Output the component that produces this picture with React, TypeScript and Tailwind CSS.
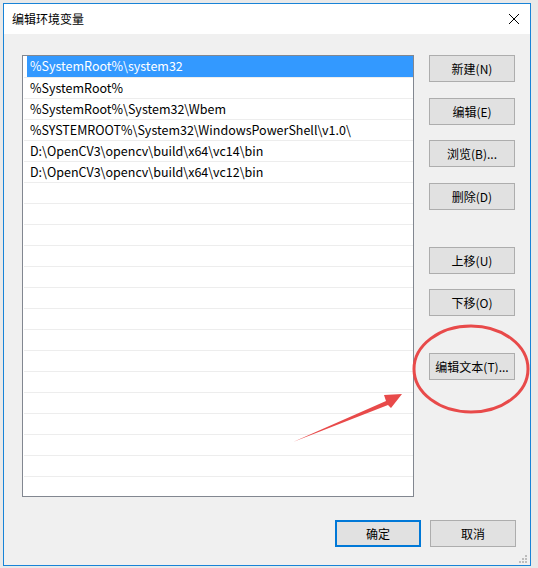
import React from "react";

const paths = [
  "%SystemRoot%\\system32",
  "%SystemRoot%",
  "%SystemRoot%\\System32\\Wbem",
  "%SYSTEMROOT%\\System32\\WindowsPowerShell\\v1.0\\",
  "D:\\OpenCV3\\opencv\\build\\x64\\vc14\\bin",
  "D:\\OpenCV3\\opencv\\build\\x64\\vc12\\bin",
];

const font = { fontFamily: '"Noto Sans CJK SC", "Noto Sans", sans-serif' };

function WinButton({ label, primary = false, className = "" }: { label: string; primary?: boolean; className?: string }) {
  return (
    <div
      className={
        "w-[86px] h-[27px] flex items-center justify-center bg-[#e1e1e1] text-[12px] text-black " +
        (primary ? "border-2 border-[#0078d7]" : "border border-[#adadad]") +
        " " +
        className
      }
    >
      {label}
    </div>
  );
}

export default function App() {
  const rows = Array.from({ length: 21 }, (_, i) => paths[i] ?? "");

  return (
    <div className="relative w-[538px] h-[568px] bg-[#e9e9e9] overflow-hidden" style={font}>
      <div className="absolute left-[3px] top-[3px] w-[528px] h-[563px] border border-[#1883d7] bg-[#f0f0f0] flex flex-col">
        {/* title bar */}
        <div className="h-[30px] bg-white flex items-center justify-between pl-[8px] pr-[10px] shrink-0">
          <span className="text-[12px] text-black">编辑环境变量</span>
          <svg width="12" height="12" viewBox="0 0 12 12">
            <path d="M1 1 L11 11 M11 1 L1 11" stroke="#000" strokeWidth="1" />
          </svg>
        </div>

        {/* body */}
        <div className="flex pl-[18px] pt-[21px]">
          <div className="w-[392px] h-[442px] border border-[#828790] bg-white overflow-hidden">
            {rows.map((text, i) => (
              <div
                key={i}
                className={
                  "h-[21px] flex items-center text-[12.5px] whitespace-nowrap " +
                  (i === 0
                    ? "ml-[4px] pl-[3px] bg-[#3399ff] text-white"
                    : "ml-[1px] pl-[6px] text-black border-t border-[#ededed]")
                }
              >
                {text}
              </div>
            ))}
          </div>

          <div className="ml-[15px] flex flex-col">
            <WinButton label="新建(N)" />
            <WinButton label="编辑(E)" className="mt-[16px]" />
            <WinButton label="浏览(B)..." className="mt-[15px]" />
            <WinButton label="删除(D)" className="mt-[16px]" />
            <WinButton label="上移(U)" className="mt-[37px]" />
            <WinButton label="下移(O)" className="mt-[15px]" />
            <WinButton label="编辑文本(T)..." className="mt-[37px]" />
          </div>
        </div>

        {/* footer */}
        <div className="flex justify-end gap-[9px] pr-[14px] mt-[23px]">
          <WinButton label="确定" primary />
          <WinButton label="取消" />
        </div>

        {/* size grip */}
        <svg className="absolute right-[2px] bottom-[1px]" width="9" height="9" viewBox="0 0 9 9">
          {[
            [6, 0],
            [3, 3],
            [6, 3],
            [0, 6],
            [3, 6],
            [6, 6],
          ].map(([x, y], i) => (
            <rect key={i} x={x} y={y} width="2" height="2" fill="#bdbdbd" />
          ))}
        </svg>
      </div>

      {/* red annotation */}
      <svg className="absolute left-0 top-0 pointer-events-none" width="538" height="568">
        <ellipse cx="471" cy="369" rx="57" ry="43" fill="none" stroke="#e84a4a" strokeWidth="3" />
        <polygon
          points="293,442 386,401 384,395 402,394 391,408 388,405"
          fill="#e84a4a"
        />
      </svg>
    </div>
  );
}
